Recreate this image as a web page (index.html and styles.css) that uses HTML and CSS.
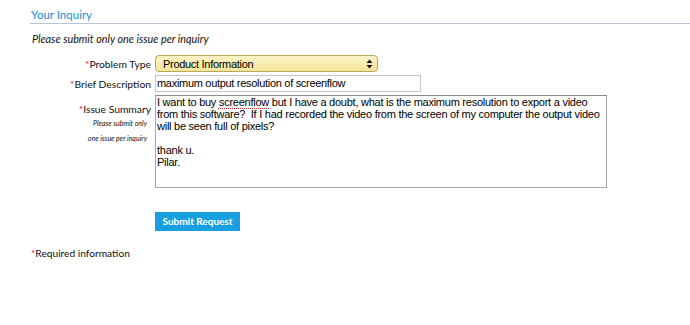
FILE: index.html
```html
<!DOCTYPE html>
<html lang="en">
<head>
    <meta charset="UTF-8">
    <title>Your Inquiry</title>
    <link rel="stylesheet" href="styles.css">
</head>
<body>

    <!-- Inquiry header -->
    <div class="section-head">
        <h2>Your Inquiry</h2>
    </div>
    <p class="note">Please submit only one issue per inquiry</p>

    <!-- Inquiry form -->
    <form class="inquiry-form">
        <label class="label"><span class="req">*</span>Problem Type</label>
        <div class="field">
            <div class="select">
                <span>Product Information</span>
                <svg class="arrows" width="7" height="10" viewBox="0 0 7 10">
                    <path d="M3.5 0.5 L6.5 4 L0.5 4 Z M3.5 9.5 L6.5 6 L0.5 6 Z" fill="#111"/>
                </svg>
            </div>
        </div>

        <label class="label"><span class="req">*</span>Brief Description</label>
        <div class="field">
            <div class="text-input">maximum output resolution of screenflow</div>
        </div>

        <div class="label label-top">
            <div><span class="req">*</span>Issue Summary</div>
            <div class="hint">Please submit only<br>one issue per inquiry</div>
        </div>
        <div class="field">
            <div class="textarea">I want to buy <span class="spell">screenflow</span> but I have a doubt, what is the maximum resolution to export a video from this software?&nbsp; If I had recorded the video from the screen of my computer the output video will be seen full of pixels?<br><br>thank u.<br>Pilar.</div>
        </div>

        <div></div>
        <div class="field actions">
            <button type="button" class="submit-btn">Submit Request</button>
        </div>
    </form>

    <p class="required"><span class="req">*</span>Required information</p>

</body>
</html>
```

FILE: styles.css
```css
* {
    margin: 0;
    padding: 0;
    box-sizing: border-box;
}

body {
    font-family: Lato, "Open Sans", sans-serif;
    color: #222;
    background: white;
    padding-left: 30px;
}

.section-head {
    border-bottom: 1px solid #b9c3d8;
    padding-top: 7px;
    height: 24px;
}

.section-head h2 {
    font-size: 11.5px;
    font-weight: normal;
    color: #1b8bd6;
    line-height: 16px;
    padding-left: 1px;
}

.note {
    font-size: 10.8px;
    font-style: italic;
    line-height: 14px;
    margin-top: 8px;
    padding-left: 2px;
    color: #111;
}

.inquiry-form {
    display: grid;
    grid-template-columns: 121px 1fr;
    column-gap: 4px;
    row-gap: 3px;
    margin-top: 9px;
}

.label {
    font-size: 10.3px;
    line-height: 16px;
    text-align: right;
    color: #111;
    padding-top: 1px;
}

.label-top {
    padding-top: 6px;
}

.req {
    color: #d0282c;
}

.hint {
    font-size: 7px;
    font-style: italic;
    line-height: 15px;
    margin-top: -1px;
    padding-right: 4px;
}

.field {
    font-family: "Liberation Sans", Arial, sans-serif;
    color: #000;
}

.select {
    width: 223px;
    height: 17px;
    border: 1px solid #b9a858;
    border-radius: 4px;
    background: linear-gradient(#fbf3c6, #f3e59a);
    display: flex;
    align-items: center;
    justify-content: space-between;
    padding: 0 4px 0 7px;
    font-size: 11px;
    letter-spacing: -0.3px;
}

.text-input {
    width: 266px;
    height: 17px;
    border: 1px solid #c4c4c4;
    padding: 0 1px;
    line-height: 15px;
    font-size: 11px;
    letter-spacing: -0.3px;
}

.textarea {
    width: 452px;
    height: 93px;
    border: 1px solid #a6a6a6;
    border-top-color: #8a8a8a;
    padding: 0 1px;
    line-height: 12px;
    font-size: 11px;
    letter-spacing: -0.25px;
}

.spell {
    text-decoration: underline dotted #e0302c;
    text-underline-offset: 2px;
}

.actions {
    padding-top: 20px;
}

.submit-btn {
    background-color: #189fe0;
    color: white;
    border: none;
    font-family: Lato, "Open Sans", sans-serif;
    font-weight: bold;
    font-size: 10px;
    height: 19px;
    width: 85px;
    padding: 0;
}

.required {
    font-size: 10.2px;
    line-height: 14px;
    margin-top: 15px;
    padding-left: 1px;
    color: #111;
}
```
